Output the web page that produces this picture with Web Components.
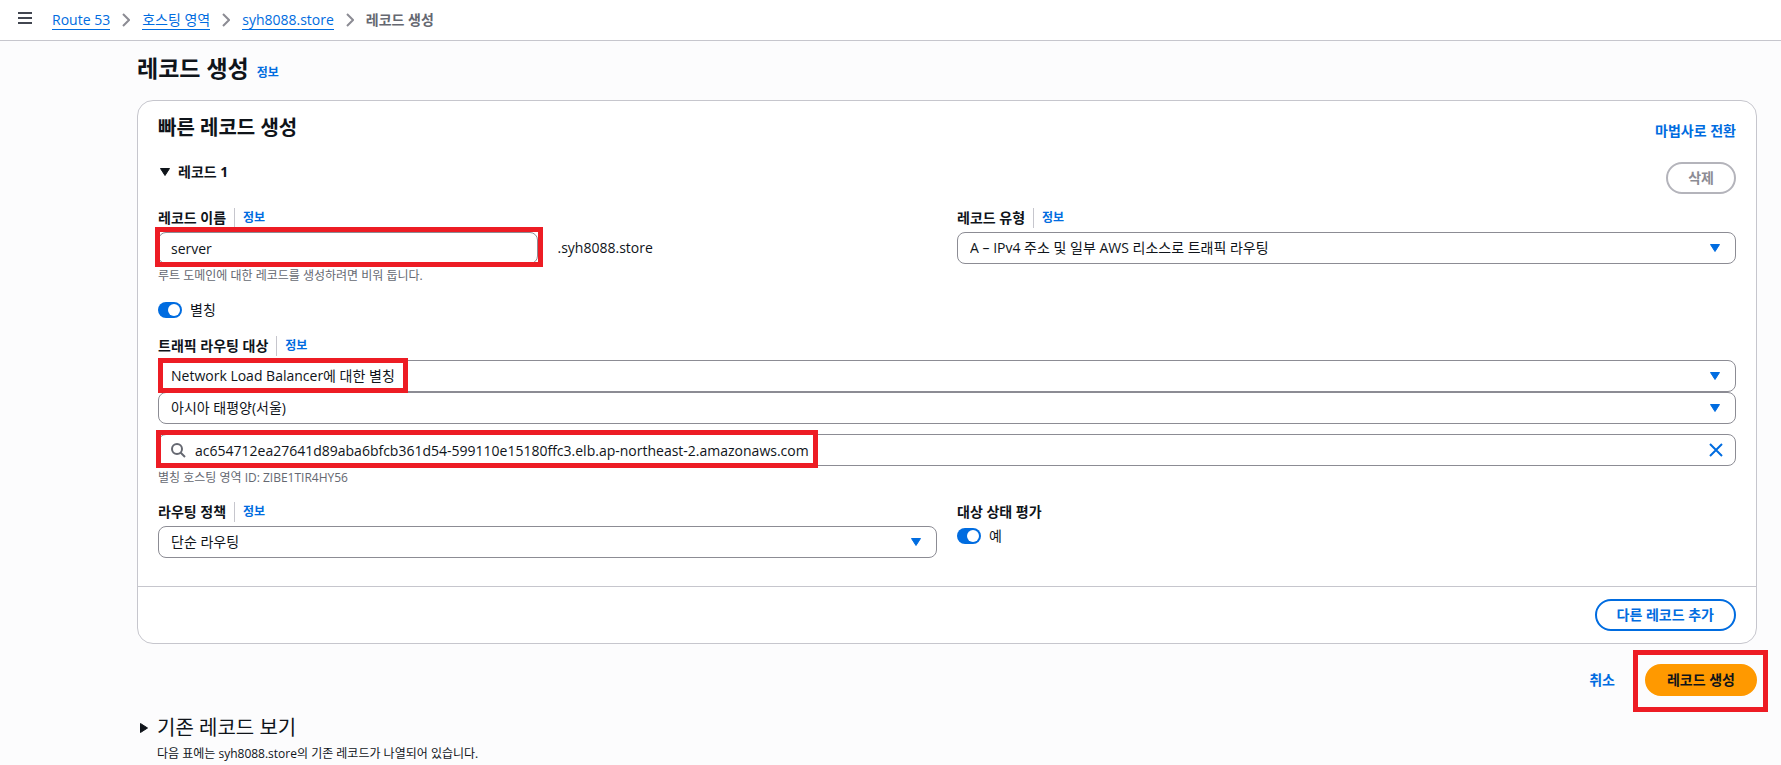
<!DOCTYPE html>
<html lang="ko">
<head>
<meta charset="utf-8">
<title>레코드 생성 | Route 53</title>
<style>
  :root {
    --text: #0f141a;
    --muted: #656871;
    --link: #006ce0;
    --control-border: #8c8c94;
    --divider: #c6c6cd;
    --accent: #ff9900;
    --mark: #ed1c24;
  }
  html, body { margin: 0; }
  body {
    background: #fcfcfd;
    color: var(--text);
    font: 14px/20px "Open Sans", "Noto Sans CJK KR", sans-serif;
  }
</style>
</head>
<body>
<record-page></record-page>

<script>
const define = (name, html, setup) => customElements.define(name, class extends HTMLElement {
  constructor() {
    super();
    const root = this.attachShadow({ mode: 'open' });
    const template = document.createElement('template');
    template.innerHTML = '<style>*{box-sizing:border-box}:host{box-sizing:border-box}</style>' + html;
    root.append(template.content.cloneNode(true));
  }
  connectedCallback() {
    if (!this._ready && setup) setup(this, this.shadowRoot);
    this._ready = true;
  }
});

const labelCss = `
  .label { display: flex; align-items: center; height: 20px; margin-bottom: 4px; }
  label, .name { font-weight: 700; }
  info-link { margin-left: 8px; padding-left: 8px; border-left: 1px solid var(--divider); line-height: 20px; }
  .hint { margin: 4px 0 0; font-size: 12px; line-height: 16px; color: var(--muted); }
`;

const controlCss = `
  .control { position: relative; display: flex; align-items: center; }
  input, select {
    appearance: none; width: 100%; min-width: 0; height: 32px; margin: 0; padding: 0 12px;
    border: 1px solid var(--control-border); border-radius: 8px; outline: 0;
    background: #fff; color: inherit; font: inherit;
  }
`;

/* Small "info" link */
define('info-link', `
  <style>
    :host { display: inline-block; font-size: 12px; font-weight: 700; }
    a { color: var(--link); text-decoration: none; }
  </style>
  <a href="#info">정보</a>`);

/* Red frame laid over a control */
define('mark-frame', `
  <style>
    :host { display: block; position: absolute; z-index: 2; border: 5px solid var(--mark); pointer-events: none; }
  </style>`);

/* Breadcrumb bar */
define('top-bar', `
  <style>
    :host { display: flex; align-items: center; height: 41px; padding: 0 18px; background: #fff; border-bottom: 1px solid var(--divider); }
    button { display: flex; padding: 0; margin: 0 20px 4px 0; border: 0; background: none; }
    ol { display: flex; align-items: center; gap: 12px; margin: 0; padding: 0; list-style: none; }
    li { display: flex; align-items: center; gap: 12px; color: var(--muted); font-weight: 700; }
    a { color: var(--link); font-weight: 400; line-height: 19px; text-decoration: none; border-bottom: 1px solid; }
    svg { display: block; }
  </style>
  <button type="button" aria-label="메뉴">
    <svg width="14" height="12" viewBox="0 0 14 12" fill="#424650"><path d="M0 0h14v2H0zM0 5h14v2H0zM0 10h14v2H0z"/></svg>
  </button>
  <nav aria-label="탐색 경로"><ol></ol></nav>`, (host, root) => {
    const chevron = '<svg width="8" height="14" viewBox="0 0 8 14" fill="none" stroke="#8c8c94" stroke-width="2"><path d="M1 1l6 6-6 6"/></svg>';
    root.querySelector('ol').innerHTML = ['Route 53', '호스팅 영역', 'syh8088.store']
      .map(name => `<li><a href="#">${name}</a>${chevron}</li>`).join('') + '<li aria-current="page">레코드 생성</li>';
  });

/* Pill button: normal, primary, link or disabled */
define('pill-button', `
  <style>
    :host { display: block; position: relative; }
    button {
      display: block; height: 32px; padding: 0 20px; border: 2px solid var(--link); border-radius: 20px;
      background: #fff; color: var(--link); font: inherit; font-weight: 700; white-space: nowrap;
    }
    :host([variant=primary]) button { border-color: var(--accent); background: var(--accent); color: var(--text); }
    :host([variant=link]) button { border-color: transparent; background: none; }
    button:disabled { border-color: #b4b4bb; color: var(--control-border); }
  </style>
  <button type="button"><slot></slot></button><slot name="mark"></slot>`, (host, root) => {
    root.querySelector('button').disabled = host.hasAttribute('disabled');
  });

/* Toggle switch, with an optional caption above it */
define('toggle-field', `
  <style>
    ${labelCss}
    :host { display: block; }
    .label[hidden] { display: none; }
    .row { display: flex; align-items: center; gap: 8px; }
    .row label { font-weight: 400; }
    input {
      appearance: none; display: flex; align-items: center; justify-content: flex-end; width: 24px; height: 16px;
      margin: 0; padding: 2px; border-radius: 8px; background: var(--link);
    }
    input::before { content: ""; width: 12px; height: 12px; border-radius: 50%; background: #fff; }
    input:not(:checked) { justify-content: flex-start; background: var(--control-border); }
  </style>
  <div class="label"><span class="name"></span></div>
  <div class="row"><input type="checkbox" role="switch" id="switch" checked><label for="switch"><slot></slot></label></div>`,
  (host, root) => {
    const caption = host.getAttribute('caption') || '';
    root.querySelector('.name').textContent = caption;
    root.querySelector('.label').hidden = !caption;
  });

/* Drop-down, with an optional label row */
define('select-field', `
  <style>
    ${labelCss}${controlCss}
    :host { display: block; }
    .label[hidden] { display: none; }
    svg { position: absolute; right: 16px; pointer-events: none; }
  </style>
  <div class="label"><label for="choice"></label><info-link></info-link></div>
  <div class="control">
    <select id="choice"><option></option></select>
    <svg width="10" height="8" viewBox="0 0 10 8" fill="#006ce0" stroke="#006ce0" stroke-linejoin="round"><path d="M.5.5h9L5 7.5z"/></svg>
    <slot name="mark"></slot>
  </div>`, (host, root) => {
    const label = host.getAttribute('label');
    root.querySelector('label').textContent = label || '';
    root.querySelector('.label').hidden = !label;
    if (!label) root.querySelector('select').setAttribute('aria-label', host.getAttribute('name'));
    root.querySelector('option').textContent = host.getAttribute('value');
  });

/* Record name box followed by its domain */
define('name-field', `
  <style>
    ${labelCss}${controlCss}
    :host { display: block; }
    .row { display: grid; grid-template-columns: minmax(0, 1fr) minmax(0, 1fr); gap: 20px; align-items: center; }
  </style>
  <div class="label"><label for="name">레코드 이름</label><info-link></info-link></div>
  <div class="row">
    <div class="control"><input id="name" type="text" value="server"><slot name="mark"></slot></div>
    <span>.syh8088.store</span>
  </div>
  <p class="hint">루트 도메인에 대한 레코드를 생성하려면 비워 둡니다.</p>`);

/* Load balancer search box */
define('search-field', `
  <style>
    ${labelCss}${controlCss}
    :host { display: block; }
    input { padding: 0 36px; }
    .glass { position: absolute; left: 12px; }
    button { position: absolute; right: 13px; display: flex; padding: 0; border: 0; background: none; }
  </style>
  <div class="control">
    <input type="text" aria-label="로드 밸런서 선택" value="ac654712ea27641d89aba6bfcb361d54-599110e15180ffc3.elb.ap-northeast-2.amazonaws.com">
    <svg class="glass" width="16" height="16" viewBox="0 0 16 16" fill="none" stroke="#656871" stroke-width="2"><circle cx="7" cy="7" r="5"/><path d="M10.5 10.5L15 15"/></svg>
    <button type="button" aria-label="지우기"><svg width="14" height="14" viewBox="0 0 14 14" fill="none" stroke="#006ce0" stroke-width="2"><path d="M1 1l12 12M13 1L1 13"/></svg></button>
    <slot name="mark"></slot>
  </div>
  <p class="hint">별칭 호스팅 영역 ID: ZIBE1TIR4HY56</p>`);

/* Card with the record form */
define('record-card', `
  <style>
    :host { display: block; background: #fff; border: 1px solid var(--divider); border-radius: 16px; }
    .body { padding: 15px 20px 28px; }
    header { display: flex; justify-content: space-between; align-items: flex-end; height: 25px; margin-bottom: 21px; }
    h2 { align-self: flex-start; margin: 0; font-size: 20px; line-height: 24px; }
    a { color: var(--link); font-weight: 700; text-decoration: none; }
    .record { display: flex; justify-content: space-between; align-items: flex-start; margin-bottom: 14px; }
    .expander { display: flex; align-items: center; gap: 8px; margin: 0 0 0 2px; padding: 0; border: 0; background: none; color: inherit; font: inherit; font-weight: 700; }
    .grid { display: grid; grid-template-columns: minmax(0, 1fr) minmax(0, 1fr); gap: 16px 20px; }
    .wide { grid-column: 1 / -1; }
    search-field { margin-top: 10px; }
    footer { display: flex; justify-content: flex-end; padding: 12px 20px; border-top: 1px solid var(--divider); }
    .name-mark { inset: -5px -5px -3px -3px; }
    .target-mark { left: 0; top: -2px; width: 250px; height: 35px; }
    .search-mark { left: -2px; top: -4px; width: 662px; height: 38px; }
  </style>
  <div class="body">
    <header><h2>빠른 레코드 생성</h2><a href="#wizard">마법사로 전환</a></header>
    <div class="record">
      <button type="button" class="expander" aria-expanded="true">
        <svg width="10" height="8" viewBox="0 0 10 8" fill="#0f141a" stroke="#0f141a" stroke-linejoin="round"><path d="M.5.5h9L5 7.5z"/></svg>레코드 1
      </button>
      <pill-button disabled>삭제</pill-button>
    </div>
    <div class="grid">
      <name-field><mark-frame slot="mark" class="name-mark"></mark-frame></name-field>
      <select-field label="레코드 유형" value="A – IPv4 주소 및 일부 AWS 리소스로 트래픽 라우팅"></select-field>
      <toggle-field class="wide">별칭</toggle-field>
      <div class="wide">
        <select-field label="트래픽 라우팅 대상" value="Network Load Balancer에 대한 별칭"><mark-frame slot="mark" class="target-mark"></mark-frame></select-field>
        <select-field name="리전" value="아시아 태평양(서울)"></select-field>
        <search-field><mark-frame slot="mark" class="search-mark"></mark-frame></search-field>
      </div>
      <select-field label="라우팅 정책" value="단순 라우팅"></select-field>
      <toggle-field caption="대상 상태 평가">예</toggle-field>
    </div>
  </div>
  <footer><pill-button>다른 레코드 추가</pill-button></footer>`);

/* Collapsed list of existing records */
define('existing-records', `
  <style>
    :host { display: block; }
    h2 { margin: 0; font-size: 20px; font-weight: 400; line-height: 24px; }
    button { display: flex; align-items: center; gap: 9px; margin: 0; padding: 0 0 0 3px; border: 0; background: none; color: inherit; font: inherit; }
    p { margin: 6px 0 0 20px; font-size: 12px; line-height: 16px; }
  </style>
  <h2><button type="button" aria-expanded="false"><svg width="8" height="10" viewBox="0 0 8 10" fill="#0f141a" stroke="#0f141a" stroke-linejoin="round"><path d="M.5.5v9L7.5 5z"/></svg>기존 레코드 보기</button></h2>
  <p>다음 표에는 syh8088.store의 기존 레코드가 나열되어 있습니다.</p>`);

define('record-page', `
  <style>
    :host { display: block; }
    main { padding: 12px 24px 0 137px; }
    .title { display: flex; align-items: baseline; gap: 8px; height: 30px; margin-bottom: 17px; }
    h1 { margin: 0; font-size: 23px; line-height: 30px; }
    .actions { display: flex; justify-content: flex-end; gap: 8px; margin: 20px 0; }
    .create-mark { inset: -14px -11px -16px -12px; }
  </style>
  <top-bar></top-bar>
  <main>
    <div class="title"><h1>레코드 생성</h1><info-link></info-link></div>
    <record-card></record-card>
    <div class="actions">
      <pill-button variant="link">취소</pill-button>
      <pill-button variant="primary">레코드 생성<mark-frame slot="mark" class="create-mark"></mark-frame></pill-button>
    </div>
    <existing-records></existing-records>
  </main>`);
</script>
</body>
</html>
